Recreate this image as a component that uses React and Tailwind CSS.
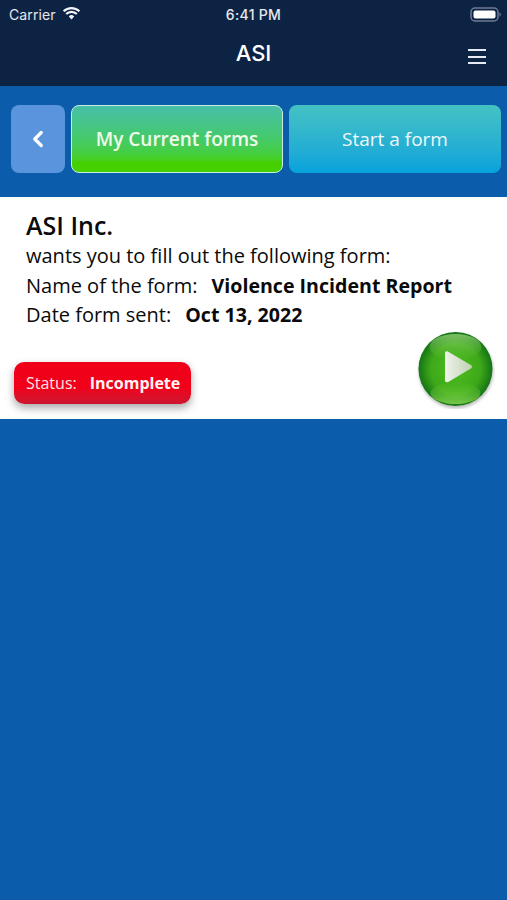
import { ChevronLeft } from 'lucide-react';

function StatusBar() {
  return (
    <div className="h-[28px] flex items-center justify-between pl-[9px] pr-[6px] text-white/90 font-['Inter',sans-serif]">
      <div className="flex items-center gap-[6px]">
        <span className="text-[14px] tracking-[0.1px]">Carrier</span>
        <svg width="19" height="14" viewBox="0 0 19 14" className="mb-[3px]">
          <path d="M9.5 13.5 6.8 10.4a3.8 3.8 0 0 1 5.4 0z" fill="#f2f4f7" />
          <path d="M1.6 5.3a11.2 11.2 0 0 1 15.8 0M4.2 8a7.5 7.5 0 0 1 10.6 0" fill="none" stroke="#f2f4f7" strokeWidth="2.2" />
        </svg>
      </div>
      <span className="absolute left-0 right-0 text-center text-[14px] font-medium tracking-[0.3px]">6:41 PM</span>
      <svg width="31" height="15" viewBox="0 0 31 15">
        <rect x="1" y="1" width="27" height="13" rx="4" fill="none" stroke="#6f7b93" strokeWidth="1.5" />
        <rect x="3.5" y="3.5" width="22" height="8" rx="2" fill="#fff" />
        <path d="M29.5 5.5c1 .4 1.3 1.2 1.3 2s-.3 1.6-1.3 2z" fill="#6f7b93" />
      </svg>
    </div>
  );
}

function PlayButton() {
  return (
    <svg width="78" height="78" viewBox="0 0 78 78" className="block">
      <defs>
        <radialGradient id="ball" cx="50%" cy="50%" r="52%">
          <stop offset="0%" stopColor="#4fbe1e" />
          <stop offset="65%" stopColor="#3ea81a" />
          <stop offset="100%" stopColor="#0f6f14" />
        </radialGradient>
        <linearGradient id="shine" x1="0" y1="0" x2="0" y2="1">
          <stop offset="0%" stopColor="#c9f0a8" stopOpacity="0.55" />
          <stop offset="100%" stopColor="#7fd650" stopOpacity="0" />
        </linearGradient>
        <linearGradient id="glow" x1="0" y1="0" x2="0" y2="1">
          <stop offset="0%" stopColor="#7bdc3a" stopOpacity="0" />
          <stop offset="100%" stopColor="#a6ee66" stopOpacity="0.65" />
        </linearGradient>
        <linearGradient id="tri" x1="0" y1="0" x2="1" y2="0">
          <stop offset="0%" stopColor="#f0f2ec" />
          <stop offset="100%" stopColor="#bfd2b2" />
        </linearGradient>
        <filter id="soft" x="-20%" y="-20%" width="140%" height="140%">
          <feGaussianBlur stdDeviation="1.6" />
        </filter>
      </defs>
      <circle cx="39" cy="40" r="37.5" fill="#000" opacity="0.25" filter="url(#soft)" />
      <circle cx="38.5" cy="38" r="37" fill="url(#ball)" />
      <ellipse cx="38.5" cy="16" rx="26" ry="13" fill="url(#shine)" />
      <ellipse cx="38.5" cy="62" rx="25" ry="11" fill="url(#glow)" />
      <path d="M28 22.5c0-2 1.5-2.8 3.2-1.8l22.6 13.3c1.6 1 1.6 2.6 0 3.6l-22.6 13.3c-1.7 1-3.2.2-3.2-1.8z" fill="url(#tri)" />
    </svg>
  );
}

export default function App() {
  return (
    <div className="relative min-h-[900px] bg-[#0c5cac] font-['Open_Sans',sans-serif]">
      <div className="h-[86px] bg-[#0d2344]">
        <StatusBar />
        <div className="relative flex h-[50px] items-center justify-center">
          <span className="text-[22px] font-medium text-white font-['Inter',sans-serif]">ASI</span>
          <div className="absolute right-[21px] top-[21px] flex w-[18px] flex-col gap-[4.5px]">
            <div className="h-[2px] bg-[#e6eaf2]" />
            <div className="h-[2px] bg-[#e6eaf2]" />
            <div className="h-[2px] bg-[#e6eaf2]" />
          </div>
        </div>
      </div>

      <div className="flex h-[111px] items-start gap-[6px] pl-[11px] pr-[6px] pt-[19px]">
        <div className="flex h-[68px] w-[54px] items-center justify-center rounded-[8px] bg-[#5a94dd]">
          <ChevronLeft className="h-[26px] w-[26px] text-white" strokeWidth={3} />
        </div>
        <div className="flex h-[68px] w-[212px] items-center justify-center rounded-[8px] border-[1.5px] border-[#c5f0e0] bg-gradient-to-b from-[#48bfa8] to-[#46d000] to-85% text-[19px] font-semibold text-[#f1fbe9]">
          My Current forms
        </div>
        <div className="flex h-[68px] flex-1 items-center justify-center rounded-[8px] bg-gradient-to-b from-[#44c2c2] to-[#04a2dc] text-[19px] font-medium text-[#eef9fc]">
          Start a form
        </div>
      </div>

      <div className="relative h-[222px] bg-white px-[26px] pt-[12px] text-[#0a0a0a]">
        <div className="text-[25px] font-semibold leading-[32px]">ASI Inc.</div>
        <div className="text-[20px] leading-[29.5px]">wants you to fill out the following form:</div>
        <div className="text-[20px] leading-[29.5px]">
          Name of the form:<span className="ml-[14px] text-[19.6px] font-bold">Violence Incident Report</span>
        </div>
        <div className="text-[20px] leading-[29.5px]">
          Date form sent:<span className="ml-[14px] text-[19.6px] font-bold">Oct 13, 2022</span>
        </div>

        <div className="absolute bottom-[15px] left-[14px] flex h-[42px] w-[177px] items-center rounded-[10px] bg-gradient-to-b from-[#f10019] from-60% to-[#cc1530] pl-[12px] text-[16px] text-[#fde3e6] shadow-[0_4px_8px_rgba(0,0,0,0.35)]">
          Status:<span className="ml-[13px] font-bold text-[#fff3f3]">Incomplete</span>
        </div>
        <div className="absolute right-[12px] top-[134px]">
          <PlayButton />
        </div>
      </div>
    </div>
  );
}
